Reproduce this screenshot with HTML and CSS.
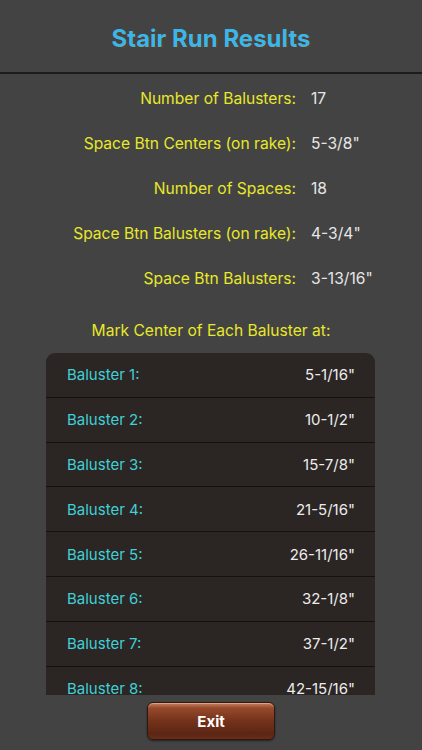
FILE: index.html
```html
<!DOCTYPE html>
<html>
<head>
<meta charset="utf-8">
<link rel="stylesheet" href="styles.css">
</head>
<body>
<div class="screen">
  <header class="header">
    <h1 class="title">Stair Run Results</h1>
  </header>
  <section class="stats">
    <div class="stat"><span class="stat-label">Number of Balusters:</span><span class="stat-value">17</span></div>
    <div class="stat"><span class="stat-label">Space Btn Centers (on rake):</span><span class="stat-value">5-3/8"</span></div>
    <div class="stat"><span class="stat-label">Number of Spaces:</span><span class="stat-value">18</span></div>
    <div class="stat"><span class="stat-label">Space Btn Balusters (on rake):</span><span class="stat-value">4-3/4"</span></div>
    <div class="stat"><span class="stat-label">Space Btn Balusters:</span><span class="stat-value">3-13/16"</span></div>
  </section>
  <div class="mark-title">Mark Center of Each Baluster at:</div>
  <div class="table">
    <div class="trow"><span class="tlabel">Baluster 1:</span><span class="tvalue">5-1/16"</span></div>
    <div class="trow"><span class="tlabel">Baluster 2:</span><span class="tvalue">10-1/2"</span></div>
    <div class="trow"><span class="tlabel">Baluster 3:</span><span class="tvalue">15-7/8"</span></div>
    <div class="trow"><span class="tlabel">Baluster 4:</span><span class="tvalue">21-5/16"</span></div>
    <div class="trow"><span class="tlabel">Baluster 5:</span><span class="tvalue">26-11/16"</span></div>
    <div class="trow"><span class="tlabel">Baluster 6:</span><span class="tvalue">32-1/8"</span></div>
    <div class="trow"><span class="tlabel">Baluster 7:</span><span class="tvalue">37-1/2"</span></div>
    <div class="trow"><span class="tlabel">Baluster 8:</span><span class="tvalue">42-15/16"</span></div>
  </div>
  <footer class="footer">
    <button class="exit">Exit</button>
  </footer>
</div>
</body>
</html>
```
FILE: styles.css
```css
* { box-sizing: border-box; }
html, body { margin: 0; padding: 0; }
body {
  background: #434343;
  font-family: "Inter", "Roboto", "Liberation Sans", sans-serif;
  width: 422px;
  height: 750px;
  overflow: hidden;
}
.screen {
  display: flex;
  flex-direction: column;
  height: 750px;
}
.header {
  height: 74px;
  border-bottom: 2px solid #1c1c1c;
  display: flex;
  align-items: center;
  justify-content: center;
  padding-top: 4px;
}
.title {
  margin: 0;
  font-size: 24px;
  font-weight: 700;
  color: #3ab7ea;
  text-shadow: 1px 1px 0 #6a3a14;
}
.stats {
  display: flex;
  flex-direction: column;
  padding-top: 2px;
}
.stat {
  height: 45px;
  display: grid;
  grid-template-columns: 296px 1fr;
  column-gap: 15px;
  align-items: center;
  font-size: 15.6px;
}
.stat-label {
  text-align: right;
  color: #e8e82a;
}
.stat-value {
  color: #e6e6e6;
}
.mark-title {
  margin-top: 18px;
  height: 24px;
  line-height: 24px;
  text-align: center;
  color: #e8e82a;
  font-size: 15.6px;
}
.table {
  margin: 10px 0 0 46px;
  width: 329px;
  height: 342px;
  background: #2b2523;
  border-radius: 9px 9px 0 0;
  overflow: hidden;
}
.trow {
  height: 44.8px;
  display: flex;
  align-items: center;
  justify-content: space-between;
  padding: 0 20px 0 21px;
  border-bottom: 1px solid #151110;
  font-size: 15px;
}
.tlabel { color: #3fd0d8; }
.tvalue { color: #ececec; }
.footer {
  flex: 1;
  display: flex;
  justify-content: center;
  padding-top: 7px;
}
.exit {
  width: 128px;
  height: 38px;
  border-radius: 6px;
  border: 1px solid #2a1a12;
  background: linear-gradient(to bottom, #c88060 0%, #964a2c 14%, #74321a 50%, #5c2614 85%, #6a2c18 100%);
  box-shadow: 0 1px 2px rgba(0,0,0,0.5), inset 0 1px 0 rgba(255,200,170,0.5);
  color: #ffffff;
  font-family: "Inter", "Roboto", "Liberation Sans", sans-serif;
  font-weight: 700;
  font-size: 15px;
  padding: 0;
}
```
